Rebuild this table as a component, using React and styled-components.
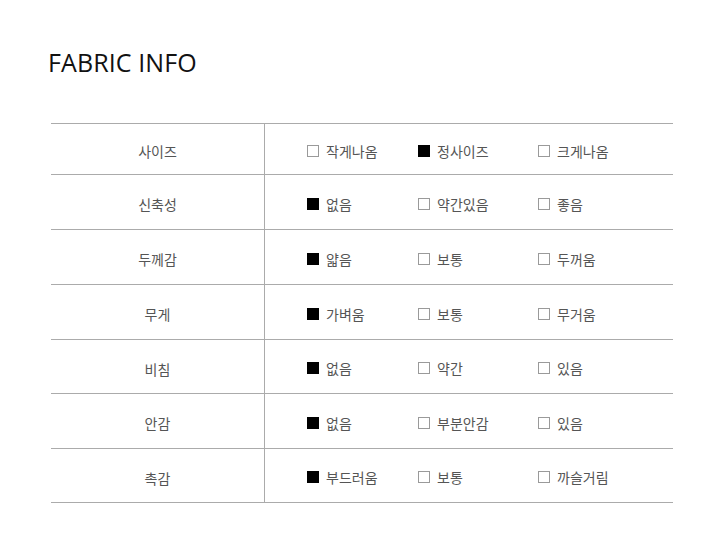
import React from 'react'
import styled, { createGlobalStyle } from 'styled-components'

const rows = [
    { label: '사이즈', height: 51, options: ['작게나옴', '정사이즈', '크게나옴'], checked: 1 },
    { label: '신축성', height: 55, options: ['없음', '약간있음', '좋음'], checked: 0 },
    { label: '두께감', height: 55, options: ['얇음', '보통', '두꺼움'], checked: 0 },
    { label: '무게', height: 55, options: ['가벼움', '보통', '무거움'], checked: 0 },
    { label: '비침', height: 54, options: ['없음', '약간', '있음'], checked: 0 },
    { label: '안감', height: 55, options: ['없음', '부분안감', '있음'], checked: 0 },
    { label: '촉감', height: 54, options: ['부드러움', '보통', '까슬거림'], checked: 0 },
]

export default function App() {
    return (
        <>
            <GlobalStyle />
            <Page>
                <Title>FABRIC INFO</Title>
                <Table>
                    {rows.map((row) => (
                        <Row key={row.label} $height={row.height}>
                            <Label>{row.label}</Label>
                            <Options>
                                {row.options.map((opt, i) => (
                                    <Option key={opt + i}>
                                        <Box $checked={i === row.checked} />
                                        <OptionText>{opt}</OptionText>
                                    </Option>
                                ))}
                            </Options>
                        </Row>
                    ))}
                </Table>
            </Page>
        </>
    )
}

const GlobalStyle = createGlobalStyle`
    body {
        margin: 0;
        background: #ffffff;
        font-family: "Noto Sans CJK KR", "Noto Sans", sans-serif;
    }
`;

const Page = styled.div`
    width: 726px;
    padding: 46px 0 0 51px;
    box-sizing: border-box;
`;

const Title = styled.h1`
    margin: 0 0 0 -3px;
    font-family: "Open Sans", "Noto Sans", sans-serif;
    font-weight: 400;
    font-size: 25px;
    line-height: 32px;
    color: #111111;
    letter-spacing: 0.1px;
`;

const Table = styled.div`
    margin-top: 45px;
    width: 622px;
    border-top: 1px solid #ababab;
`;

const Row = styled.div`
    display: flex;
    height: ${(p) => p.$height}px;
    border-bottom: 1px solid #ababab;
    box-sizing: border-box;
`;

const Label = styled.div`
    width: 214px;
    border-right: 1px solid #ababab;
    display: flex;
    align-items: center;
    justify-content: center;
    padding-top: 4px;
    box-sizing: border-box;
    font-size: 14px;
    color: #555555;
`;

const Options = styled.div`
    flex: 1;
    display: grid;
    grid-template-columns: 111px 120px auto;
    align-items: center;
    padding: 3px 0 0 42px;
`;

const Option = styled.div`
    display: flex;
    align-items: center;
    gap: 7px;
`;

const Box = styled.span`
    width: 12px;
    height: 12px;
    box-sizing: border-box;
    border: 1px solid ${(p) => (p.$checked ? '#000000' : '#9a9a9a')};
    background: ${(p) => (p.$checked ? '#000000' : '#ffffff')};
`;

const OptionText = styled.span`
    font-size: 14px;
    color: #555555;
`;
